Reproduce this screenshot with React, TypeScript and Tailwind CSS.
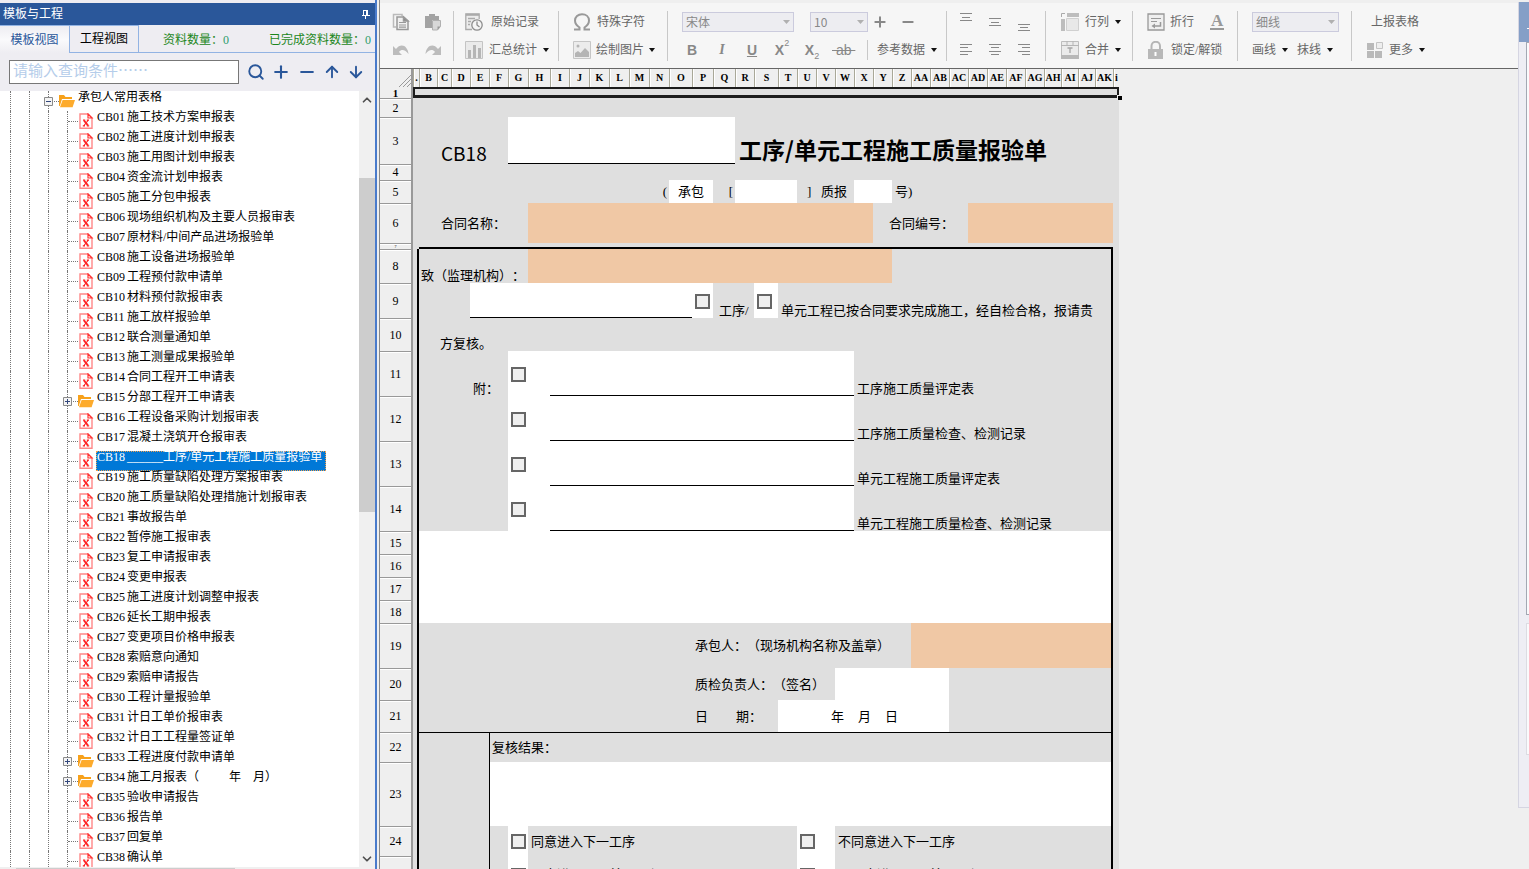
import type { ReactNode } from 'react';
import { ChevronDown, ChevronUp, Minus, Plus, Search, ArrowUp, ArrowDown } from 'lucide-react';
import clsx from 'clsx';

const treeItems: ITreeItem[] = [
  { code: 'CB01', name: '施工技术方案申报表' },
  { code: 'CB02', name: '施工进度计划申报表' },
  { code: 'CB03', name: '施工用图计划申报表' },
  { code: 'CB04', name: '资金流计划申报表' },
  { code: 'CB05', name: '施工分包申报表' },
  { code: 'CB06', name: '现场组织机构及主要人员报审表' },
  { code: 'CB07', name: '原材料/中间产品进场报验单' },
  { code: 'CB08', name: '施工设备进场报验单' },
  { code: 'CB09', name: '工程预付款申请单' },
  { code: 'CB10', name: '材料预付款报审表' },
  { code: 'CB11', name: '施工放样报验单' },
  { code: 'CB12', name: '联合测量通知单' },
  { code: 'CB13', name: '施工测量成果报验单' },
  { code: 'CB14', name: '合同工程开工申请表' },
  { code: 'CB15', name: '分部工程开工申请表', folder: true },
  { code: 'CB16', name: '工程设备采购计划报审表' },
  { code: 'CB17', name: '混凝土浇筑开仓报审表' },
  { code: 'CB18', name: '______工序/单元工程施工质量报验单', selected: true },
  { code: 'CB19', name: '施工质量缺陷处理方案报审表' },
  { code: 'CB20', name: '施工质量缺陷处理措施计划报审表' },
  { code: 'CB21', name: '事故报告单' },
  { code: 'CB22', name: '暂停施工报审表' },
  { code: 'CB23', name: '复工申请报审表' },
  { code: 'CB24', name: '变更申报表' },
  { code: 'CB25', name: '施工进度计划调整申报表' },
  { code: 'CB26', name: '延长工期申报表' },
  { code: 'CB27', name: '变更项目价格申报表' },
  { code: 'CB28', name: '索赔意向通知' },
  { code: 'CB29', name: '索赔申请报告' },
  { code: 'CB30', name: '工程计量报验单' },
  { code: 'CB31', name: '计日工单价报审表' },
  { code: 'CB32', name: '计日工工程量签证单' },
  { code: 'CB33', name: '工程进度付款申请单', folder: true },
  { code: 'CB34', name: '施工月报表（          年    月）', folder: true },
  { code: 'CB35', name: '验收申请报告' },
  { code: 'CB36', name: '报告单' },
  { code: 'CB37', name: '回复单' },
  { code: 'CB38', name: '确认单' }
];

// The first and last columns are too narrow for their letters
const columns: [string, number][] = [
  ['.', 6], ['B', 18], ['C', 14], ['D', 19], ['E', 19], ['F', 19], ['G', 20], ['H', 22], ['I', 19], ['J', 20],
  ['K', 20], ['L', 20], ['M', 20], ['N', 20], ['O', 23], ['P', 21], ['Q', 22], ['R', 19], ['S', 24], ['T', 19],
  ['U', 19], ['V', 19], ['W', 19], ['X', 19], ['Y', 19], ['Z', 19], ['AA', 19], ['AB', 19], ['AC', 19], ['AD', 19],
  ['AE', 19], ['AF', 19], ['AG', 19], ['AH', 17], ['AI', 17], ['AJ', 17], ['AK', 18], ['i', 6]
];

/* ---------- Icons ---------- */

function FileIcon() {
  return (
    <svg width="16" height="16" viewBox="0 0 16 16" fill="none" className="shrink-0">
      <path d="M2 1h8l4 4v10.300H2z" fill="#fff" stroke="#f88" strokeWidth="1.400" />
      <path d="M10 1v4h4z" fill="#fff" stroke="#f33" strokeWidth="1.200" />
      <path d="M6 7.500l4 5" stroke="#f22" strokeWidth="2" />
      <path d="M10 7.500l-4 5M5 7.200h2.200M8.800 7.200H11M4.800 12.800H7M8.800 12.800h2.400" stroke="#f22" strokeWidth="1.200" />
    </svg>
  );
}

function FolderIcon() {
  return (
    <svg width="16" height="14" viewBox="0 0 16 14" className="shrink-0">
      <path d="M0 1h5l1.500 2H13v2H3L.8 12H0z" fill="#f7a11b" />
      <path d="M3.600 6H16l-2.400 7.200H1z" fill="#fdab2c" />
    </svg>
  );
}

function Caret() {
  return (
    <svg width="6" height="4" viewBox="0 0 6 4" className="shrink-0">
      <path d="M0 0h6L3 4z" fill="#111" />
    </svg>
  );
}

function CopyIcon() {
  return (
    <svg width="18" height="18" viewBox="0 0 18 18" fill="none" stroke="#999" strokeWidth="1.500">
      <path d="M4 14H1.500V1.500H10V3" stroke="#bbb" />
      <path d="M5 4h6.500L16 8v8.500H5z" fill="#f0f0f0" />
      <path d="M11.500 4v4H16z" fill="#888" />
      <path d="M7 9.500h7M7 12h7M7 14.200h7" strokeWidth="1.200" />
    </svg>
  );
}

function PasteIcon() {
  return (
    <svg width="18" height="18" viewBox="0 0 18 18">
      <path d="M1 3h4V1h6v2h4v4H8v8H1z" fill="#a3a3a3" />
      <path d="M8.500 7.500h8v6L13.500 17h-5z" fill="#d8d8d8" stroke="#b0b0b0" />
      <path d="M16.500 13.500h-3V17z" fill="#999" />
    </svg>
  );
}

function UndoIcon({ flip }: { flip?: boolean }) {
  return (
    <svg width="18" height="14" viewBox="0 0 18 14" className={clsx(flip && '-scale-x-100')}>
      <path d="M1 3v9h9L7 9c2.500-3 6-2.500 9.500 2C16 3 9-1 4 6z" fill="#bcbcbc" />
    </svg>
  );
}

function RecordIcon() {
  return (
    <svg width="18" height="18" viewBox="0 0 18 18" fill="none" stroke="#aaa" strokeWidth="1.300">
      <path d="M7 16.500H.8V.8h13.400V6" fill="#ececec" />
      <path d="M1 1.800h13" strokeWidth="2" />
      <path d="M3 5.500h7M3 8.500h3M3 11.500h2" />
      <circle cx="12" cy="12" r="5.200" fill="#f5f5f5" stroke="#8d8d8d" />
      <path d="M12 8.500V12l2.500 2" stroke="#8d8d8d" />
    </svg>
  );
}

function StatsIcon() {
  return (
    <svg width="18" height="18" viewBox="0 0 18 18">
      <path d="M.5.5h17v17H.5z" fill="#eaeaea" stroke="#c4c4c4" />
      <path d="M3 9h3v8H3zM8 4h3v13H8zM13 7h3v10h-3z" fill="#b5b5b5" />
    </svg>
  );
}

function OmegaIcon() {
  return (
    <svg width="18" height="18" viewBox="0 0 18 18" fill="none" stroke="#999" strokeWidth="2">
      <path d="M1 16.500h5.500v-2C3.500 12.500 2 10.500 2 7.500 2 3.800 5 1.200 9 1.200s7 2.600 7 6.300c0 3-1.500 5-4.500 7v2H17" />
    </svg>
  );
}

function PictureIcon() {
  return (
    <svg width="18" height="18" viewBox="0 0 18 18">
      <path d="M.5.5h17v17H.5z" fill="#ececec" stroke="#c6c6c6" />
      <circle cx="5" cy="5" r="1.500" fill="#b5b5b5" />
      <path d="M2 16v-4l3-2 2.500 2L12 7l4 4v5z" fill="#b5b5b5" />
    </svg>
  );
}

function RowColIcon() {
  return (
    <svg width="18" height="18" viewBox="0 0 18 18">
      <path d="M6 0h12v4H6zM0 6h4v12H0z" fill="#bdbdbd" />
      <path d="M5.500 5.500h12v12h-12z" fill="#e8e8e8" stroke="#d0d0d0" />
      <path d="M.5 4V.5H4" fill="none" stroke="#aaa" />
    </svg>
  );
}

function MergeIcon() {
  return (
    <svg width="18" height="18" viewBox="0 0 18 18">
      <path d="M.5.5h17v17H.5z" fill="#ebebeb" stroke="#bdbdbd" />
      <path d="M0 4.500h18M6 0v4M12 0v4" stroke="#b5b5b5" />
      <path d="M0 14h18v4H0z" fill="#b8b8b8" />
      <path d="M6.500 7h5M9 7v5" stroke="#a5a5a5" strokeWidth="1.300" />
    </svg>
  );
}

function WrapIcon() {
  return (
    <svg width="18" height="18" viewBox="0 0 18 18" fill="none" stroke="#999">
      <path d="M1 1h16v16H1z" fill="#efefef" strokeWidth="1.300" />
      <path d="M4 5.500h10M4 8.500h6" />
      <path d="M13.500 9v4H6" strokeWidth="1.500" />
      <path d="M8 10.500v5L4.500 13z" fill="#999" stroke="none" />
    </svg>
  );
}

function LockIcon() {
  return (
    <svg width="18" height="18" viewBox="0 0 18 18">
      <path d="M4.500 9V5A4.200 4.200 0 0113 5v4" fill="none" stroke="#b5b5b5" strokeWidth="2" />
      <path d="M1 8h15v10H1z" fill="#b8b8b8" />
      <path d="M8.500 11v4" stroke="#fff" strokeWidth="2" />
    </svg>
  );
}

function MoreIcon() {
  return (
    <svg width="16" height="16" viewBox="0 0 16 16">
      <path d="M0 1h7v7H0zM0 9h7v7H0zM8 9h7v7H8z" fill="#b9b9b9" />
      <path d="M9.500.5h6v6h-6z" fill="#eee" stroke="#c4c4c4" />
    </svg>
  );
}

function LinesIcon({ d, label }: { d: string; label: string }) {
  return (
    <button className="flex w-[29px] justify-center" aria-label={label}>
      <svg width="14" height="18" viewBox="0 0 14 18" stroke="#888">
        <path d={d} />
      </svg>
    </button>
  );
}

function PinIcon() {
  return (
    <svg width="8" height="9" viewBox="0 0 8 9" fill="none" stroke="#fff">
      <path d="M1 .5h5M1.500 0v5.500M4.500 0v5.500M5.500 0v5.500M0 5.500h8M3.500 6v3" />
    </svg>
  );
}

/* ---------- Left panel ---------- */

function Expander({ open }: { open?: boolean }) {
  return (
    <svg width="9" height="9" viewBox="0 0 9 9" className="absolute top-[6px] -left-[5px]">
      <path d="M.5.5h8v8h-8z" fill="#f4f4f4" stroke="#8a8a8a" />
      <path d={open ? 'M2 4.500h5' : 'M2 4.500h5M4.500 2v5'} stroke="#33477c" />
    </svg>
  );
}

function Guide({ children, line }: { children?: ReactNode; line?: boolean }) {
  return (
    <span className={clsx('relative flex h-5 shrink-0 items-center border-l border-dotted border-[#777]', line ? 'w-[11px]' : 'w-[19px]')}>
      {line && <span className="h-px w-full border-t border-dotted border-[#777]" />}
      {children}
    </span>
  );
}

function TreeRow({ item }: { item: ITreeItem }) {
  return (
    <li role="treeitem" aria-selected={!!item.selected} className="flex h-5 items-center">
      <Guide />
      <Guide />
      <Guide />
      <Guide line>{item.folder && <Expander />}</Guide>
      {item.folder ? <FolderIcon /> : <FileIcon />}
      <span
        className={clsx(
          'ml-[2px] flex h-5 border border-dotted pr-[3px] leading-[11px] whitespace-pre',
          item.selected ? 'border-[#f0a050] bg-[#0078d7] text-white' : 'border-transparent text-black'
        )}
      >
        <span className="w-[30px] shrink-0">{item.code}</span>
        {item.name}
      </span>
    </li>
  );
}

function LeftPanel() {
  return (
    <aside className="flex w-[377px] shrink-0 flex-col border-r-2 border-[#4a7bcb] bg-[#eeedf2] pt-[3px]">
      <div className="flex h-[22px] shrink-0 items-center justify-between bg-[#2a579a] pr-[5px] pl-[3px] text-white">
        <h1>模板与工程</h1>
        <PinIcon />
      </div>

      <div className="flex h-7 shrink-0" role="tablist">
        <button role="tab" aria-selected="true" className="w-[69px] border-t border-[#92b3e3] bg-linear-to-b from-[#eeedf2] via-[#fafafc] to-[#eeedf2] text-[#2a579a]">
          模板视图
        </button>
        <button role="tab" aria-selected="false" className="w-[70px] border border-[#92b3e3] text-black">
          工程视图
        </button>
        <div className="flex flex-1 items-center justify-between border-b border-[#92b3e3] pt-[3px] pr-[4px] pl-6 text-[#1b861b]">
          <span>
            资料数量：<span className="text-[#2c9c6c]">0</span>
          </span>
          <span>
            已完成资料数量：<span className="text-[#2c9c6c]">0</span>
          </span>
        </div>
      </div>

      <div className="flex h-[38px] shrink-0 items-center pl-[9px] text-[#2a579a]">
        <input
          type="text"
          aria-label="查询条件"
          placeholder="请输入查询条件⋯⋯"
          className="h-6 w-[230px] border border-[#777] bg-white px-[3px] pb-[5px] font-[Noto_Sans_CJK_SC] text-[15px] placeholder:text-[#b5cdea]"
        />
        <div className="ml-2 flex flex-1 justify-between pr-[10px]">
          <button aria-label="搜索"><Search size={18} strokeWidth={2.5} /></button>
          <button aria-label="展开"><Plus size={20} strokeWidth={2.5} /></button>
          <button aria-label="收起"><Minus size={20} strokeWidth={2.5} /></button>
          <button aria-label="上一个"><ArrowUp size={18} strokeWidth={2.5} /></button>
          <button aria-label="下一个"><ArrowDown size={18} strokeWidth={2.5} /></button>
        </div>
      </div>

      <div className="flex min-h-0 flex-1 bg-white">
        <ul role="tree" className="min-w-0 flex-1 overflow-hidden pl-[10px]">
          <li role="treeitem" aria-selected="false" className="flex h-5 items-center">
            <Guide />
            <Guide />
            <Guide line><Expander open /></Guide>
            <FolderIcon />
            <span className="ml-[3px] h-5 leading-[13px]">承包人常用表格</span>
          </li>
          {treeItems.map((item) => (
            <TreeRow key={item.code} item={item} />
          ))}
        </ul>
        <div className="flex w-4 flex-col items-center bg-[#f0f0f0] text-[#505050]">
          <ChevronUp size={14} strokeWidth={3} className="mt-[2px] shrink-0" />
          <div className="mt-[71px] mb-auto h-[43%] w-full bg-[#cdcdcd]" />
          <ChevronDown size={14} strokeWidth={3} className="mb-[1px] shrink-0" />
        </div>
      </div>
      <div className="h-[2px] shrink-0 bg-[#f0f0f0] pt-px pl-4">
        <div className="h-px w-[219px] bg-[#cdcdcd]" />
      </div>
    </aside>
  );
}

/* ---------- Toolbar ---------- */

function Group({ width, top, bottom }: { width: string; top: ReactNode; bottom: ReactNode }) {
  return (
    <div className={clsx('flex h-[50px] shrink-0 flex-col justify-between', width)}>
      <div className="flex h-[21px] items-center">{top}</div>
      <div className="flex h-[21px] items-center pb-px">{bottom}</div>
    </div>
  );
}

function Tool({ icon, text, caret, gap = 'gap-[6px]' }: { icon?: ReactNode; text: string; caret?: boolean; gap?: string }) {
  return (
    <button className={clsx('flex items-center whitespace-nowrap', gap)}>
      {icon}
      {text}
      {caret && <Caret />}
    </button>
  );
}

function Dropdown({ value, label, width }: { value: string; label: string; width: string }) {
  return (
    <span className={clsx('relative flex items-center', width)}>
      <select aria-label={label} className="h-5 w-full appearance-none border border-[#cbcbdd] bg-[#ededf1] pl-[3px] font-[Noto_Sans_CJK_SC] leading-[18px] text-[#888]">
        <option>{value}</option>
      </select>
      <svg width="7" height="4" viewBox="0 0 7 4" className="absolute right-1">
        <path d="M0 0h7L3.500 4z" fill="#b0b0b0" />
      </svg>
    </span>
  );
}

function Toolbar() {
  return (
    <div className="mt-[3px] flex h-[66px] shrink-0 overflow-hidden border-b border-[#666] bg-[#f6f6f6] pt-2 text-[#666]">
      <Group
        width="w-[74px] border-r border-[#c8c8c8] pl-3"
        top={<div className="flex gap-[14px]"><button aria-label="复制"><CopyIcon /></button><button aria-label="粘贴"><PasteIcon /></button></div>}
        bottom={<div className="flex gap-[14px]"><button aria-label="撤销"><UndoIcon /></button><button aria-label="重做"><UndoIcon flip /></button></div>}
      />
      <Group
        width="w-[105px] border-r border-[#c8c8c8] pl-[11px]"
        top={<Tool icon={<RecordIcon />} text="原始记录" gap="gap-2" />}
        bottom={<Tool icon={<StatsIcon />} text="汇总统计" caret />}
      />
      <Group
        width="w-[109px] border-r border-[#c8c8c8] pl-[14px]"
        top={<Tool icon={<OmegaIcon />} text="特殊字符" />}
        bottom={<Tool icon={<PictureIcon />} text="绘制图片" caret gap="gap-[5px]" />}
      />
      <Group
        width="w-[279px] border-r border-[#c8c8c8] pl-[14px]"
        top={
          <>
            <Dropdown label="字体" value="宋体" width="w-28" />
            <span className="w-4" />
            <Dropdown label="字号" value="10" width="w-[58px]" />
            <button aria-label="增大" className="ml-1"><Plus size={16} strokeWidth={3} color="#888" /></button>
            <button aria-label="减小" className="ml-3"><Minus size={16} strokeWidth={3} color="#888" /></button>
          </>
        }
        bottom={
          <>
            <div className="flex w-[185px] items-center gap-[10px] font-[Liberation_Sans] text-[14px] text-[#888]">
              <button className="w-5 font-bold">B</button>
              <button className="w-5 font-[Liberation_Serif] font-bold italic">I</button>
              <button className="w-5 font-bold underline">U</button>
              <button className="flex w-5 justify-center font-bold">X<span className="-mt-1 text-[9px] font-normal">2</span></button>
              <button className="flex w-5 items-end justify-center font-bold">X<span className="-mb-1 text-[9px] font-normal">2</span></button>
              <button className="w-5 line-through">&nbsp;ab&nbsp;</button>
            </div>
            <span className="mr-[9px] h-full border-l border-[#c8c8c8]" />
            <Tool text="参考数据" caret />
          </>
        }
      />
      <Group
        width="w-[99px] border-r border-[#c8c8c8] pl-1"
        top={
          <>
            <LinesIcon label="顶端对齐" d="M1 .5h12M3 4.500h8M1 7.500h12" />
            <LinesIcon label="垂直居中" d="M1 5.500h12M3 9.500h8M1 12.500h12" />
            <LinesIcon label="底端对齐" d="M1 11.500h12M3 14.500h8M1 17.500h12" />
          </>
        }
        bottom={
          <>
            <LinesIcon label="左对齐" d="M1 3.500h12M1 6.500h8M1 10.500h12M1 13.500h8" />
            <LinesIcon label="居中" d="M1 3.500h12M3 6.500h8M1 10.500h12M3 13.500h8" />
            <LinesIcon label="右对齐" d="M1 3.500h12M5 6.500h8M1 10.500h12M5 13.500h8" />
          </>
        }
      />
      <Group
        width="w-[87px] border-r border-[#c8c8c8] pl-[15px]"
        top={<Tool icon={<RowColIcon />} text="行列" caret />}
        bottom={<Tool icon={<MergeIcon />} text="合并" caret />}
      />
      <Group
        width="w-[105px] border-r border-[#c8c8c8] pl-[14px]"
        top={
          <>
            <Tool icon={<WrapIcon />} text="折行" gap="gap-[5px]" />
            <button className="ml-4 border-b-2 border-[#999] px-px text-[17px] leading-[14px] font-bold text-[#999]">A</button>
          </>
        }
        bottom={<Tool icon={<LockIcon />} text="锁定/解锁" />}
      />
      <Group
        width="w-[114px] border-r border-[#c8c8c8] pl-[14px]"
        top={<Dropdown label="线型" value="细线" width="w-[87px]" />}
        bottom={
          <div className="flex gap-[9px]">
            <Tool text="画线" caret />
            <Tool text="抹线" caret />
          </div>
        }
      />
      <Group
        width="w-[120px] pl-[15px]"
        top={<span className="pl-1"><Tool text="上报表格" /></span>}
        bottom={<Tool icon={<MoreIcon />} text="更多" caret />}
      />
    </div>
  );
}

/* ---------- Sheet ---------- */

function Row({ n, h, framed, children }: { n: number; h: string; framed?: boolean; children?: ReactNode }) {
  return (
    <tr className={h}>
      <th
        className={clsx(
          'border-t border-r-2 border-[#999] bg-[#efefef] p-0 text-center font-normal shadow-[inset_0_1px_0_#fff]',
          n === 7 ? 'text-[4px]' : 'pb-px text-[12px]'
        )}
      >
        {n}
      </th>
      {framed && <td className="border-r-2 border-black p-0" />}
      {children ?? <td colSpan={38} className="p-0" />}
      {framed && <td className="p-0" />}
    </tr>
  );
}

function C({ span, className, children }: { span: number; className?: string; children?: ReactNode }) {
  return (
    <td colSpan={span} className={clsx('p-0 whitespace-pre', className)}>
      {children}
    </td>
  );
}

function Tick({ label }: { label: string }) {
  return (
    <input
      type="checkbox"
      aria-label={label}
      className="mt-px ml-[3px] block size-[15px] appearance-none border-2 border-[#666] bg-[#efefef]"
    />
  );
}

function Sheet() {
  const attachments: [number, string][] = [
    [11, '工序施工质量评定表'],
    [12, '工序施工质量检查、检测记录'],
    [13, '单元工程施工质量评定表'],
    [14, '单元工程施工质量检查、检测记录']
  ];
  const results: [number, string, string][] = [
    [24, 'h-[30px]', '同意进入下一工序'],
    [25, 'h-[37px]', '同意进入下一单元工程']
  ];

  return (
    <div className="relative w-[739px]">
      <table className="w-[739px] table-fixed border-separate border-spacing-0 bg-[#dfdfdf] text-[13px] leading-none text-black">
        <colgroup>
          <col style={{ width: 33 }} />
          {columns.map(([name, width]) => (
            <col key={name} style={{ width }} />
          ))}
        </colgroup>
        <thead>
          <tr className="h-[18px] bg-[#efefef] text-[10px]">
            <th className="border-r-2 border-[#999] p-0">
              <svg width="12" height="12" viewBox="0 0 12 12" stroke="#999" className="mt-[5px] ml-auto">
                <path d="M0 12L12 0M4 12l8-8M8 12l4-4" />
              </svg>
            </th>
            {columns.map(([name]) => (
              <th key={name} className="border-l border-[#a9a898] p-0 text-center shadow-[inset_1px_0_0_#fff]">
                {name}
              </th>
            ))}
          </tr>
        </thead>
        <tbody>
          <tr className="h-[11px]">
            <th className="border-r-2 border-[#999] bg-[#efefef] p-0 text-[11px] leading-[10px]">1</th>
            <td colSpan={38} className="border-2 border-b-3 border-[#1c1c1c] p-0" />
          </tr>
          <Row n={2} h="h-[19px]" />
          <Row n={3} h="h-[47px]">
            <C span={2} />
            <C span={4} className="pb-[2px] pl-[4px] align-bottom font-[Noto_Sans_CJK_SC] text-[19px]">CB18</C>
            <C span={11} className="border-b border-black bg-white" />
            <C span={21} className="pb-[3px] pl-[4px] align-bottom font-[Noto_Sans_CJK_SC] text-[23px] font-bold">工序/单元工程施工质量报验单</C>
          </Row>
          <Row n={4} h="h-[16px]" />
          <Row n={5} h="h-[23px]">
            <C span={14} className="pr-[2px] text-right">(</C>
            <C span={2} className="bg-white text-center">承包</C>
            <C span={1} className="pr-[2px] text-right">[</C>
            <C span={3} className="bg-white" />
            <C span={3} className="pl-[10px]">]   质报</C>
            <C span={2} className="bg-white" />
            <C span={13} className="pl-[3px]">号)</C>
          </Row>
          <Row n={6} h="h-[40px]">
            <C span={2} />
            <C span={5} className="pl-1">合同名称：</C>
            <C span={17} className="bg-[#f0c8a5]" />
            <C span={5} className="pl-4">合同编号：</C>
            <C span={8} className="bg-[#f0c8a5]" />
            <C span={1} />
          </Row>
          <Row n={7} h="h-[6px]">
            <C span={1} />
            <C span={36} className="border-b-2 border-black" />
            <C span={1} />
          </Row>
          <Row n={8} h="h-[34px]" framed>
            <C span={6} className="pb-px pl-[2px] align-bottom">致（监理机构）：</C>
            <C span={18} className="bg-[#f0c8a5]" />
            <C span={12} className="border-r-2 border-black" />
          </Row>
          <Row n={9} h="h-[35px]" framed>
            <C span={3} />
            <C span={11} className="border-b border-black bg-white" />
            <C span={1} className="bg-white"><Tick label="工序" /></C>
            <C span={2} className="pb-px pl-[6px] align-bottom">工序/</C>
            <C span={1} className="bg-white"><Tick label="单元工程" /></C>
            <C span={18} className="border-r-2 border-black pb-px pl-[3px] align-bottom">
              单元工程已按合同要求完成施工，经自检合格，报请贵
            </C>
          </Row>
          <Row n={10} h="h-[33px]" framed>
            <C span={1} />
            <C span={35} className="border-r-2 border-black pb-px pl-[3px] align-bottom">方复核。</C>
          </Row>
          {attachments.map(([n, name]) => (
            <Row key={n} n={n} h="h-[45px]" framed>
              <C span={5} className="pr-[9px] pb-px text-right align-bottom">{n === 11 && '附：'}</C>
              <C span={2} className="bg-white"><Tick label={name} /></C>
              <C span={15} className="border-b border-black bg-white" />
              <C span={14} className="border-r-2 border-black pb-px pl-[3px] align-bottom">{name}</C>
            </Row>
          ))}
          {[15, 16, 17, 18].map((n) => (
            <Row key={n} n={n} h="h-[23px]" framed>
              <C span={36} className="border-r-2 border-black bg-white" />
            </Row>
          ))}
          <Row n={19} h="h-[45px]" framed>
            <C span={14} />
            <C span={11} className="pl-[3px]">承包人：（现场机构名称及盖章）</C>
            <C span={11} className="border-r-2 border-black bg-[#f0c8a5]" />
          </Row>
          <Row n={20} h="h-[32px]" framed>
            <C span={14} />
            <C span={7} className="pl-[3px]">质检负责人：（签名）</C>
            <C span={6} className="bg-white" />
            <C span={9} className="border-r-2 border-black" />
          </Row>
          <Row n={21} h="h-[32px]" framed>
            <C span={14} />
            <C span={4} className="pl-[3px]"><div className="flex gap-7"><span>日</span><span>期：</span></div></C>
            <C span={9} className="bg-white pl-[53px]">
              <div className="flex gap-[14px]"><span>年</span><span>月</span><span>日</span></div>
            </C>
            <C span={9} className="border-r-2 border-black" />
          </Row>
          <Row n={22} h="h-[30px]" framed>
            <C span={4} className="border-t border-black" />
            <C span={32} className="border-t border-r-2 border-l border-black pl-[2px]">复核结果：</C>
          </Row>
          <Row n={23} h="h-[64px]" framed>
            <C span={4} />
            <C span={32} className="border-r-2 border-l border-black bg-white" />
          </Row>
          {results.map(([n, h, text]) => (
            <Row key={n} n={n} h={h} framed>
              <C span={4} />
              <C span={1} className="border-l border-black" />
              <C span={1} className="bg-white"><Tick label={text} /></C>
              <C span={13} className="pl-[3px]">{text}</C>
              <C span={2} className="bg-white"><Tick label={'不' + text} /></C>
              <C span={15} className="border-r-2 border-black pl-[3px]">{'不' + text}</C>
            </Row>
          ))}
        </tbody>
      </table>
      {/* Fill handle of the selected row */}
      <div className="absolute top-[26px] -right-[3px] size-[5px] border-t border-l border-[#efefef] bg-black" />
    </div>
  );
}

/* Window docked past the right edge */
function DockedWindow() {
  return (
    <div className="absolute top-[2px] right-0 flex h-[806px] w-[11px] flex-col border-b border-l border-[#d5d5e2] bg-[#eeeef4]">
      <div className="flex h-10 shrink-0 items-center justify-end bg-[#859fc7]">
        <div className="mt-3 h-px w-[2px] bg-white" />
      </div>
      <div className="ml-[7px] h-[573px] border-y border-l border-[#a3a8b3] bg-[#fafafc]" />
      <div className="mt-2 ml-[7px] h-[132px] border-y border-l border-[#dcdce2] bg-[#fafafc]" />
    </div>
  );
}

export default function App() {
  return (
    <div className="relative flex h-screen overflow-hidden bg-[#efefef] font-[Liberation_Serif,Noto_Sans_CJK_SC,serif] text-[12px] leading-none [text-spacing-trim:space-all]">
      <LeftPanel />
      <main className="ml-[2px] flex min-w-0 flex-1 flex-col overflow-hidden border-l border-[#888]">
        <Toolbar />
        <Sheet />
      </main>
      <DockedWindow />
    </div>
  );
}

interface ITreeItem {
  code: string;
  name: string;
  folder?: boolean;
  selected?: boolean;
}
